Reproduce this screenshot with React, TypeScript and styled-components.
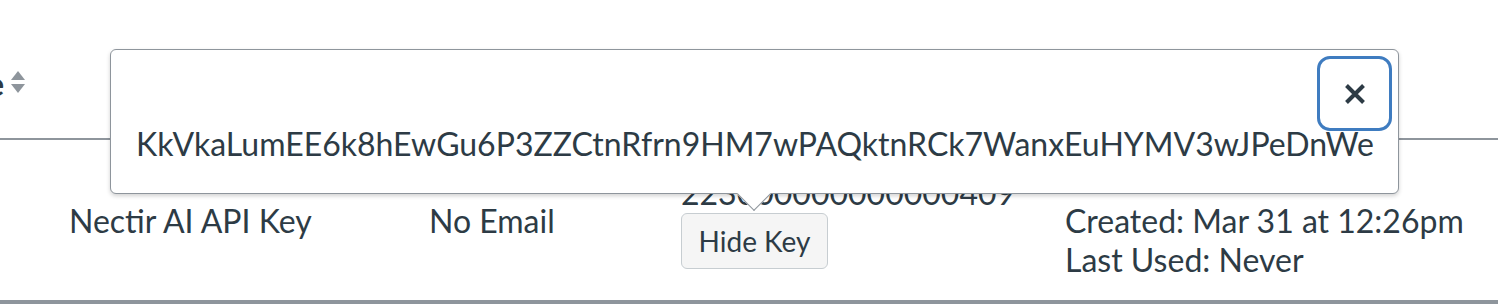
import React from "react";
import styled, { createGlobalStyle } from "styled-components";

const GlobalStyle = createGlobalStyle`
  html, body { margin: 0; padding: 0; background: #ffffff; }
  body {
    font-family: Lato, "Noto Sans", "Liberation Sans", sans-serif;
    color: #2d3b45;
    overflow: hidden;
  }
`;

const FS = 32;

const Page = styled.div`
  position: relative;
  width: 1498px;
  height: 308px;
  font-size: ${FS}px;
  line-height: 38.5px;
`;

const HeaderRow = styled.div`
  height: 140px;
  border-bottom: 2px solid #8e959c;
  display: flex;
  align-items: flex-start;
  padding-top: 65px;
  box-sizing: border-box;
`;

const LabelClip = styled.div`
  width: 4px;
  display: flex;
  justify-content: flex-end;
  white-space: nowrap;
  font-weight: 700;
`;

const SortIcon = styled.svg`
  margin-left: 7px;
  margin-top: 6px;
  flex: none;
`;

const DataRow = styled.div`
  display: grid;
  grid-template-columns: 360px 252px 384px 1fr;
  padding-left: 69px;
  height: 160px;
  border-bottom: 4px solid #8e959c;
`;

const Cell = styled.div<{ $top: number }>`
  padding-top: ${(p) => p.$top}px;
  white-space: nowrap;
`;

const Line = styled.div``;

const HideButton = styled.button`
  display: inline-flex;
  align-items: center;
  justify-content: center;
  width: 147px;
  height: 56px;
  background: #f5f5f5;
  border: 1.5px solid #c7cdd1;
  border-radius: 6px;
  font-family: inherit;
  font-size: 28px;
  color: #2d3b45;
  padding: 0;
`;

const Popover = styled.div`
  position: absolute;
  left: 110px;
  top: 49px;
  width: 1289px;
  height: 145px;
  box-sizing: border-box;
  background: #ffffff;
  border: 1.5px solid #8e959c;
  border-radius: 6px;
  box-shadow: 0 2px 4px rgba(0, 0, 0, 0.18);
  display: flex;
  flex-direction: column;
  padding: 6px 6px 0 25px;
`;

const CloseButton = styled.button`
  align-self: flex-end;
  width: 75px;
  height: 75px;
  box-sizing: border-box;
  border: 3px solid #3f7cc0;
  border-radius: 13px;
  background: #ffffff;
  display: flex;
  align-items: center;
  justify-content: center;
  padding: 0;
  color: #2d3b45;
`;

const KeyText = styled.div`
  margin-top: -6px;
  white-space: nowrap;
`;

const Caret = styled.div`
  position: absolute;
  left: 631px;
  bottom: -13px;
  width: 23px;
  height: 23px;
  background: #ffffff;
  border-right: 1.5px solid #8e959c;
  border-bottom: 1.5px solid #8e959c;
  transform: rotate(45deg);
`;

export default function App() {
  return (
    <>
      <GlobalStyle />
      <Page>
        <HeaderRow>
          <LabelClip>Name</LabelClip>
          <SortIcon width="14" height="22" viewBox="0 0 14 22">
            <path d="M7 0 L14 9 L0 9 Z" fill="#8e959c" />
            <path d="M0 13 L14 13 L7 22 Z" fill="#8e959c" />
          </SortIcon>
        </HeaderRow>
        <DataRow>
          <Cell $top={62}>Nectir AI API Key</Cell>
          <Cell $top={62}>No Email</Cell>
          <Cell $top={34}>
            <Line>223000000000000409</Line>
            <HideButton>Hide Key</HideButton>
          </Cell>
          <Cell $top={62}>
            <Line>Created: Mar 31 at 12:26pm</Line>
            <Line>Last Used: Never</Line>
          </Cell>
        </DataRow>
        <Popover>
          <CloseButton aria-label="Close">
            <svg width="22" height="22" viewBox="0 0 22 22">
              <path
                d="M2.5 2.5 L19.5 19.5 M19.5 2.5 L2.5 19.5"
                stroke="#2d3b45"
                strokeWidth="4"
                strokeLinecap="butt"
                fill="none"
              />
            </svg>
          </CloseButton>
          <KeyText>KkVkaLumEE6k8hEwGu6P3ZZCtnRfrn9HM7wPAQktnRCk7WanxEuHYMV3wJPeDnWe</KeyText>
          <Caret />
        </Popover>
      </Page>
    </>
  );
}
